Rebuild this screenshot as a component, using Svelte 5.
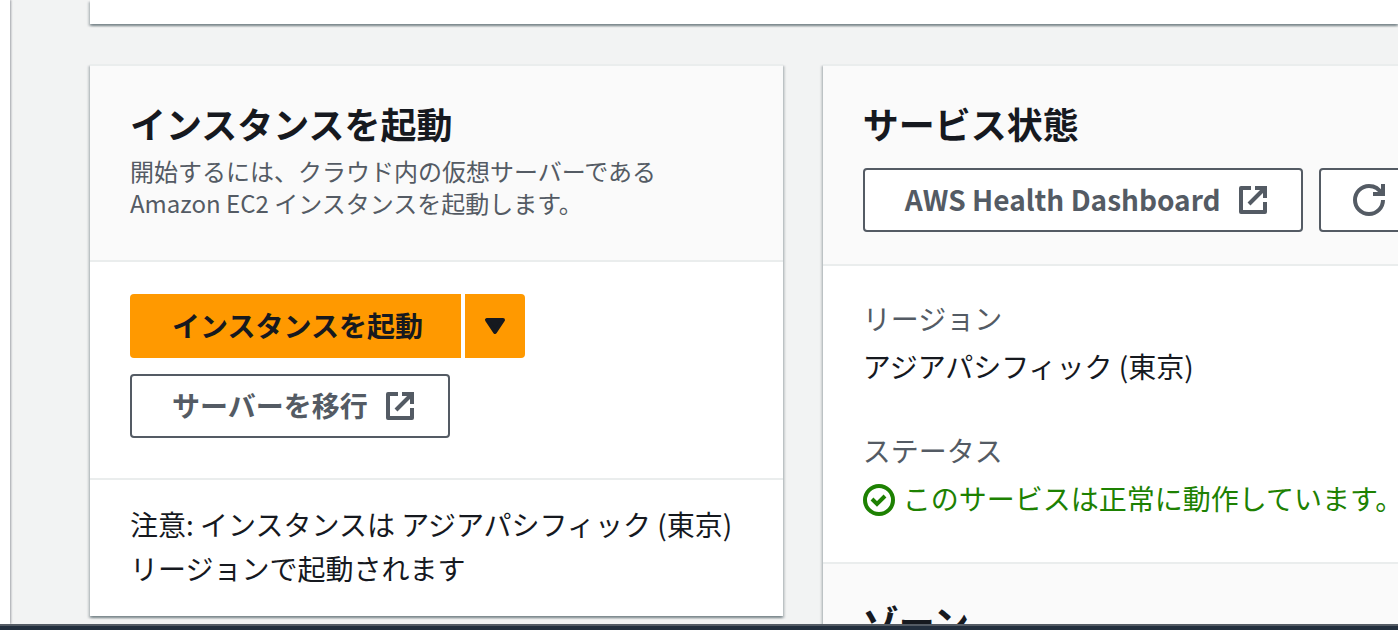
<script>
  const details = { region: 'アジアパシフィック (東京)', status: 'このサービスは正常に動作しています。' };
</script>

{#snippet externalIcon()}
  <svg class="icon" viewBox="0 0 16 16" aria-hidden="true">
    <path d="M9 2h5v5" />
    <path d="M6 10l8-8" />
    <path d="M14 9v5H2V2h5" stroke-linejoin="round" />
  </svg>
{/snippet}

<div class="page">
  <div class="layout">
    <div class="side"></div>
    <main>
      <section class="card summary"></section>
      <div class="columns">
        <section class="card">
          <header>
            <h2>インスタンスを起動</h2>
            <p class="description">開始するには、クラウド内の仮想サーバーである<br />Amazon EC2 インスタンスを起動します。</p>
          </header>
          <div class="actions">
            <div class="split">
              <button class="primary launch">インスタンスを起動</button>
              <button class="primary more" aria-label="その他のオプション">
                <svg class="icon caret" viewBox="0 0 16 16" aria-hidden="true"><path d="M4 5h8l-4 6z" /></svg>
              </button>
            </div>
            <a class="button" href="#migrate">サーバーを移行{@render externalIcon()}</a>
          </div>
          <p class="note">注意: インスタンスは アジアパシフィック (東京)<br />リージョンで起動されます</p>
        </section>

        <section class="card">
          <header class="health">
            <h2>サービス状態</h2>
            <div class="buttons">
              <a class="button" href="#health">AWS Health Dashboard{@render externalIcon()}</a>
              <button class="button refresh" aria-label="更新">
                <svg class="icon" viewBox="0 0 16 16" aria-hidden="true">
                  <path d="M15 8c0 3.87-3.13 7-7 7s-7-3.13-7-7 3.13-7 7-7c2.79 0 5.2 1.63 6.33 4" />
                  <path d="M10 5h5V0" />
                </svg>
              </button>
            </div>
          </header>
          <dl>
            <div>
              <dt>リージョン</dt>
              <dd>{details.region}</dd>
            </div>
            <div>
              <dt>ステータス</dt>
              <dd class="ok">
                <svg class="icon" viewBox="0 0 16 16" aria-hidden="true">
                  <circle cx="8" cy="8" r="7" />
                  <path d="M4.5 7.5l2.5 2.5 4-4" />
                </svg>
                {details.status}
              </dd>
            </div>
          </dl>
          <header class="zones">
            <h2>ゾーン</h2>
          </header>
        </section>
      </div>
    </main>
  </div>
  <footer></footer>
</div>

<style>
  .page {
    display: flex;
    flex-direction: column;
    height: 100vh;
    overflow: hidden;
    background: #f2f3f3;
    color: #16191f;
    font: 28px/44px 'Noto Sans CJK JP', sans-serif;
  }
  .layout {
    display: flex;
    flex: 1;
    min-height: 0;
    overflow: hidden;
  }
  .side {
    flex: 0 0 10px;
    background: #fff;
    box-shadow: 1px 0 2px 0 rgba(0, 7, 22, 0.35);
  }
  main {
    flex: 1;
    min-width: 0;
    padding-left: 80px;
  }
  .card {
    min-width: 0;
    background: #fff;
    box-shadow:
      0 2px 2px 0 rgba(0, 28, 36, 0.3),
      2px 2px 2px 0 rgba(0, 28, 36, 0.15),
      -2px 2px 2px 0 rgba(0, 28, 36, 0.15);
  }
  .summary {
    height: 24px;
  }
  .columns {
    display: grid;
    grid-template-columns: 53fr 44fr;
    align-items: start;
    gap: 40px;
    margin-top: 40px;
  }
  .columns .card {
    border-top: 2px solid #eaeded;
  }
  header {
    padding: 35px 40px 41px;
    background: #fafafa;
    border-bottom: 2px solid #eaeded;
  }
  h2,
  p,
  dl,
  dd {
    margin: 0;
  }
  h2 {
    font-size: 36px;
    line-height: 44px;
    font-weight: 700;
  }
  .description {
    margin-top: 10px;
    color: #545b64;
    font-size: 24px;
    line-height: 32px;
    white-space: nowrap;
  }
  .actions {
    display: flex;
    flex-direction: column;
    align-items: flex-start;
    gap: 16px;
    padding: 32px 40px 40px;
  }
  .split {
    display: flex;
    gap: 4px;
  }
  .button,
  .primary {
    display: flex;
    align-items: center;
    box-sizing: border-box;
    height: 64px;
    font: inherit;
    font-weight: 700;
    white-space: nowrap;
    cursor: pointer;
  }
  .primary {
    border: 0;
    background: #f90;
    color: #16191f;
  }
  .launch {
    padding: 0 38px 2px 42px;
    border-radius: 4px 0 0 4px;
  }
  .more {
    padding: 0 14px 2px;
    border-radius: 0 4px 4px 0;
  }
  .button {
    gap: 16px;
    padding: 0 32px 2px 40px;
    border: 2px solid #545b64;
    border-radius: 4px;
    background: #fff;
    color: #545b64;
    text-decoration: none;
  }
  .button.refresh {
    padding: 0 32px 2px;
  }
  .icon {
    flex: none;
    width: 32px;
    height: 32px;
    margin-top: 2px;
    fill: none;
    stroke: currentColor;
    stroke-width: 2;
  }
  .caret {
    fill: currentColor;
    stroke-linejoin: round;
  }
  .note {
    padding: 22px 40px 26px;
    border-top: 2px solid #eaeded;
    white-space: nowrap;
  }
  .health {
    padding-bottom: 32px;
  }
  .buttons {
    display: flex;
    gap: 16px;
    margin-top: 23px;
  }
  .buttons .button {
    flex: none;
  }
  dl {
    display: grid;
    gap: 40px;
    padding: 30px 0 42px 40px;
  }
  dt {
    color: #545b64;
  }
  dd {
    margin-top: 4px;
  }
  .ok {
    display: flex;
    align-items: center;
    gap: 8px;
    color: #1d8102;
    white-space: nowrap;
  }
  .ok .icon {
    margin-top: 4px;
  }
  .zones {
    border-top: 2px solid #eaeded;
  }
  footer {
    flex: none;
    height: 4px;
    border-top: 2px solid #545b64;
    background: #232f3e;
  }
</style>
